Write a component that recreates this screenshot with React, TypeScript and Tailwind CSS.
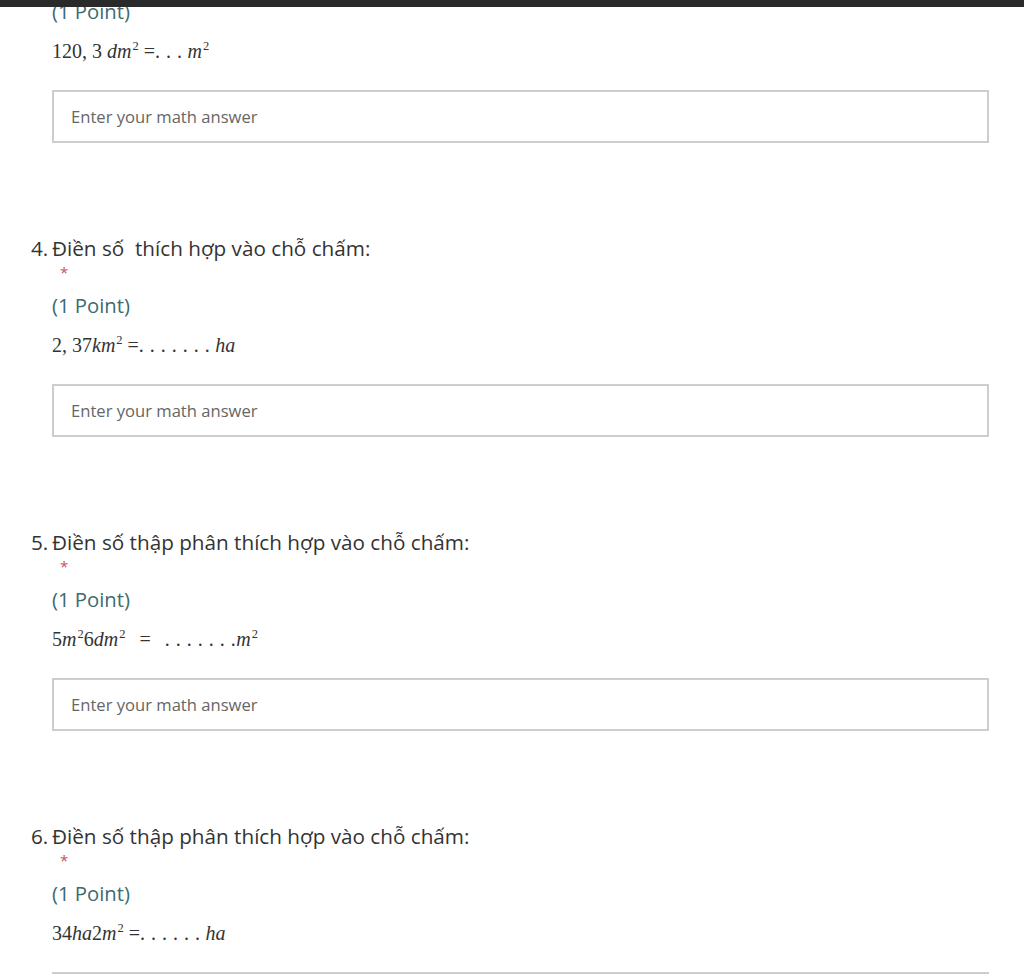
import React from "react";

type Question = {
  num?: string;
  title?: string;
  math: React.ReactNode;
};

const sup = (s: string) => (
  <sup className="relative -top-[8px] pl-[1px] text-[12.5px] not-italic leading-none">{s}</sup>
);
const i = (s: string) => <i>{s}</i>;
const dots = (n: number) => (
  <span className="tracking-[0.5px]">{Array(n).fill(".").join(" ")}</span>
);

const QUESTIONS: Question[] = [
  {
    math: (
      <>
        120, 3 {i("dm")}
        {sup("2")} ={dots(3)} {i("m")}
        {sup("2")}
      </>
    ),
  },
  {
    num: "4.",
    title: "Điền số  thích hợp vào chỗ chấm:",
    math: (
      <>
        2, 37{i("km")}
        {sup("2")} ={dots(7)} {i("ha")}
      </>
    ),
  },
  {
    num: "5.",
    title: "Điền số thập phân thích hợp vào chỗ chấm:",
    math: (
      <>
        5{i("m")}
        {sup("2")}6{i("dm")}
        {sup("2")}
        <span className="px-[14px]">=</span>
        {dots(7)}
        {i("m")}
        {sup("2")}
      </>
    ),
  },
  {
    num: "6.",
    title: "Điền số thập phân thích hợp vào chỗ chấm:",
    math: (
      <>
        34{i("ha")}2{i("m")}
        {sup("2")} ={dots(6)} {i("ha")}
      </>
    ),
  },
];

function QuestionBlock({ q }: { q: Question }) {
  return (
    <div className="mb-[92px]">
      {q.title && (
        <>
          <div className="flex h-7 items-center text-[20.7px] text-[#333]">
            <span className="w-[21px]">{q.num}</span>
            <span className="whitespace-pre">{q.title}</span>
          </div>
          <div className="h-[18px] pl-[29px] text-[15px] leading-[18px] text-[#c4545a]">*</div>
        </>
      )}
      <div className={`${q.title ? "mt-[10px]" : ""} pl-[21px] h-7 leading-7 text-[20.3px] text-[#3d6b70]`}>
        (1 Point)
      </div>
      <div
        className="mt-3 pl-[21px] h-7 leading-7 text-[20px] text-[#333]"
        style={{ fontFamily: '"Liberation Serif", "Times New Roman", serif' }}
      >
        {q.math}
      </div>
      <div className="ml-[21px] mt-[25px] h-[53px] w-[937px] border-2 border-[#cdcdcd] bg-white">
        <input
          readOnly
          placeholder="Enter your math answer"
          className="h-full w-full bg-transparent pl-[17px] text-[16.6px] text-[#333] outline-none placeholder:text-[#666]"
        />
      </div>
    </div>
  );
}

export default function App() {
  return (
    <div
      className="h-[974px] w-[1024px] overflow-hidden bg-white"
      style={{ fontFamily: '"Open Sans", "Noto Sans", sans-serif' }}
    >
      <div className="relative z-10 h-[7px] bg-[#2a2a2a]" />
      <div className="-mt-[10px] pl-[31px]">
        {QUESTIONS.map((q, idx) => (
          <QuestionBlock key={idx} q={q} />
        ))}
      </div>
    </div>
  );
}
